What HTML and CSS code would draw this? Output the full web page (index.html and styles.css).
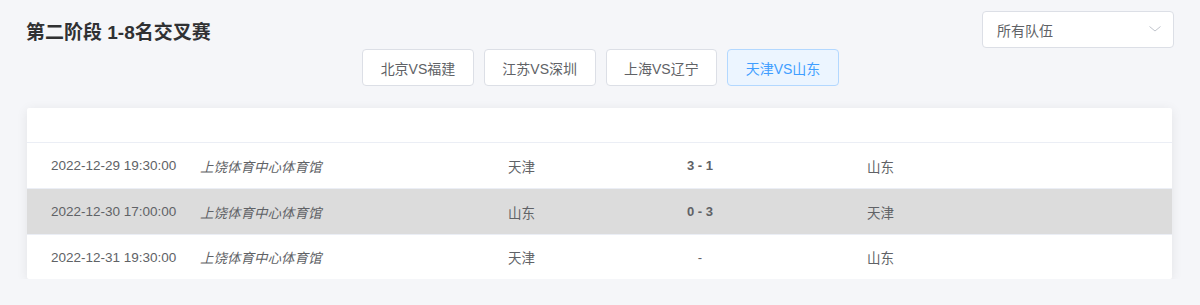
FILE: index.html
```html
<!DOCTYPE html>
<html lang="zh">
<head>
<meta charset="utf-8">
<title>第二阶段 1-8名交叉赛</title>
<link rel="stylesheet" href="styles.css">
</head>
<body>
<div class="page">
  <div class="top">
    <h2 class="title">第二阶段 1-8名交叉赛</h2>
    <div class="select">
      <span>所有队伍</span>
      <svg class="arrow" width="12" height="6" viewBox="0 0 12 6"><path d="M0.5 0.5 L6 5 L11.5 0.5" fill="none" stroke="#c0c4cc" stroke-width="1"/></svg>
    </div>
  </div>
  <div class="tabs">
    <button class="tab">北京VS福建</button>
    <button class="tab">江苏VS深圳</button>
    <button class="tab">上海VS辽宁</button>
    <button class="tab active">天津VS山东</button>
  </div>
  <div class="card">
    <div class="thead"></div>
    <div class="row">
      <div class="c date">2022-12-29 19:30:00</div>
      <div class="c venue">上饶体育中心体育馆</div>
      <div class="c team">天津</div>
      <div class="c score">3 - 1</div>
      <div class="c away">山东</div>
    </div>
    <div class="row hl">
      <div class="c date">2022-12-30 17:00:00</div>
      <div class="c venue">上饶体育中心体育馆</div>
      <div class="c team">山东</div>
      <div class="c score">0 - 3</div>
      <div class="c away">天津</div>
    </div>
    <div class="row last">
      <div class="c date">2022-12-31 19:30:00</div>
      <div class="c venue">上饶体育中心体育馆</div>
      <div class="c team">天津</div>
      <div class="c score plain">-</div>
      <div class="c away">山东</div>
    </div>
  </div>
</div>
</body>
</html>
```
FILE: styles.css
```css
html, body {
  margin: 0;
  padding: 0;
  background: #f5f6f9;
  font-family: "Liberation Sans", Arial, "Noto Sans CJK SC", sans-serif;
  color: #606266;
}
.page {
  padding: 11px 26px 0 27px;
}
.top {
  display: flex;
  justify-content: space-between;
  align-items: flex-start;
}
.title {
  margin: 0;
  padding-top: 11px;
  font-size: 19px;
  line-height: 22px;
  font-weight: bold;
  color: #303133;
  margin-left: -1px;
}
.select {
  width: 192px;
  height: 37px;
  box-sizing: border-box;
  background: #fff;
  border: 1px solid #dcdfe6;
  border-radius: 4px;
  display: flex;
  align-items: center;
  justify-content: space-between;
  padding: 0 12px 0 14px;
  font-size: 14px;
  color: #606266;
}
.arrow {
  display: block;
  margin-top: -1px;
}
.tabs {
  display: flex;
  justify-content: center;
  gap: 10px;
  margin-top: 1px;
  margin-right: 0;
}
.tab {
  height: 37px;
  box-sizing: border-box;
  padding: 0 17.5px;
  background: #fff;
  border: 1px solid #dcdfe6;
  border-radius: 4px;
  font-family: inherit;
  font-size: 14px;
  color: #606266;
  cursor: pointer;
}
.tab.active {
  background: #ecf5ff;
  border-color: #b3d8ff;
  color: #409eff;
}
.card {
  margin-top: 22px;
  margin-right: 2px;
  background: #fff;
  border-radius: 2px;
  box-shadow: 0 2px 12px rgba(0, 0, 0, 0.08);
}
.thead {
  height: 34px;
  border-bottom: 1px solid #ebeef5;
}
.row {
  display: grid;
  grid-template-columns: 149px 308px 129px 126px 1fr;
  align-items: center;
  height: 45px;
  padding-left: 24px;
  border-bottom: 1px solid #ebeef5;
  font-size: 13.5px;
}
.row.hl {
  background: #dcdcdc;
}
.row.last {
  border-bottom: none;
  height: 44px;
}
.venue {
  font-style: italic;
}
.score {
  text-align: center;
  font-weight: bold;
  font-size: 13px;
}
.score.plain {
  font-weight: normal;
}
.away {
  padding-left: 104px;
}
```
